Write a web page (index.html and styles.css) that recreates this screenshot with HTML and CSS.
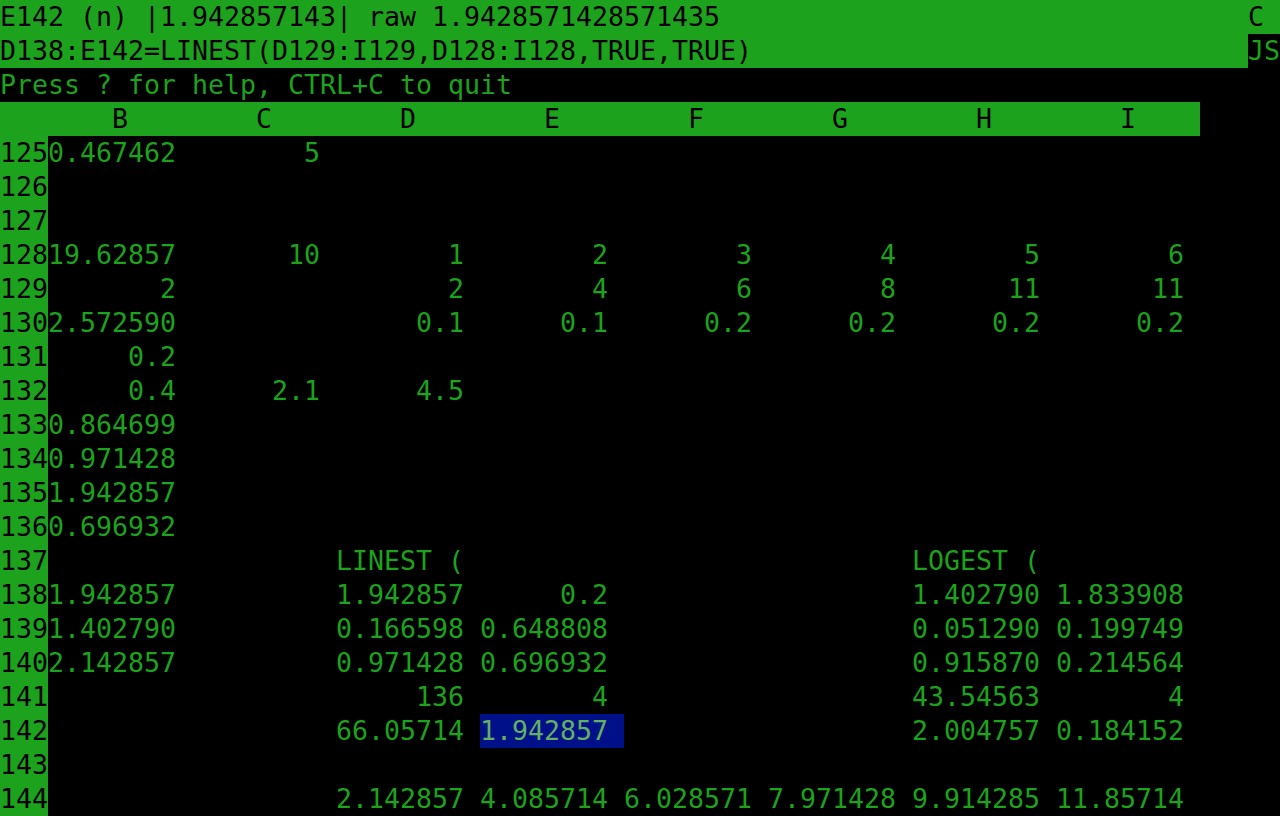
FILE: index.html
```html
<!DOCTYPE html>
<html>
<head>
<meta charset="utf-8">
<link rel="stylesheet" href="styles.css">
</head>
<body>
<div class="screen">
  <div class="line status">
    <span class="grow">E142 (n) |1.942857143| raw 1.9428571428571435</span>
    <span class="mode">C</span><span class="pad"></span>
  </div>
  <div class="line status">
    <span class="grow">D138:E142=LINEST(D129:I129,D128:I128,TRUE,TRUE)</span>
    <span class="js">JS</span>
  </div>
  <div class="line help">Press ? for help, CTRL+C to quit</div>
  <div class="line header">
    <span class="rn"></span>
    <span class="col">B</span><span class="col">C</span><span class="col">D</span><span class="col">E</span>
    <span class="col">F</span><span class="col">G</span><span class="col">H</span><span class="col">I</span>
  </div>
  <div class="line"><span class="rn">125</span><span class="c">0.467462</span><span class="c">5</span></div>
  <div class="line"><span class="rn">126</span></div>
  <div class="line"><span class="rn">127</span></div>
  <div class="line"><span class="rn">128</span><span class="c">19.62857</span><span class="c">10</span><span class="c">1</span><span class="c">2</span><span class="c">3</span><span class="c">4</span><span class="c">5</span><span class="c">6</span></div>
  <div class="line"><span class="rn">129</span><span class="c">2</span><span class="c"></span><span class="c">2</span><span class="c">4</span><span class="c">6</span><span class="c">8</span><span class="c">11</span><span class="c">11</span></div>
  <div class="line"><span class="rn">130</span><span class="c">2.572590</span><span class="c"></span><span class="c">0.1</span><span class="c">0.1</span><span class="c">0.2</span><span class="c">0.2</span><span class="c">0.2</span><span class="c">0.2</span></div>
  <div class="line"><span class="rn">131</span><span class="c">0.2</span></div>
  <div class="line"><span class="rn">132</span><span class="c">0.4</span><span class="c">2.1</span><span class="c">4.5</span></div>
  <div class="line"><span class="rn">133</span><span class="c">0.864699</span></div>
  <div class="line"><span class="rn">134</span><span class="c">0.971428</span></div>
  <div class="line"><span class="rn">135</span><span class="c">1.942857</span></div>
  <div class="line"><span class="rn">136</span><span class="c">0.696932</span></div>
  <div class="line"><span class="rn">137</span><span class="c"></span><span class="c"></span><span class="c lbl">LINEST (</span><span class="c"></span><span class="c"></span><span class="c"></span><span class="c lbl">LOGEST (</span></div>
  <div class="line"><span class="rn">138</span><span class="c">1.942857</span><span class="c"></span><span class="c">1.942857</span><span class="c">0.2</span><span class="c"></span><span class="c"></span><span class="c">1.402790</span><span class="c">1.833908</span></div>
  <div class="line"><span class="rn">139</span><span class="c">1.402790</span><span class="c"></span><span class="c">0.166598</span><span class="c">0.648808</span><span class="c"></span><span class="c"></span><span class="c">0.051290</span><span class="c">0.199749</span></div>
  <div class="line"><span class="rn">140</span><span class="c">2.142857</span><span class="c"></span><span class="c">0.971428</span><span class="c">0.696932</span><span class="c"></span><span class="c"></span><span class="c">0.915870</span><span class="c">0.214564</span></div>
  <div class="line"><span class="rn">141</span><span class="c"></span><span class="c"></span><span class="c">136</span><span class="c">4</span><span class="c"></span><span class="c"></span><span class="c">43.54563</span><span class="c">4</span></div>
  <div class="line"><span class="rn">142</span><span class="c"></span><span class="c"></span><span class="c">66.05714</span><span class="c sel">1.942857</span><span class="c"></span><span class="c"></span><span class="c">2.004757</span><span class="c">0.184152</span></div>
  <div class="line"><span class="rn">143</span></div>
  <div class="line"><span class="rn">144</span><span class="c"></span><span class="c"></span><span class="c">2.142857</span><span class="c">4.085714</span><span class="c">6.028571</span><span class="c">7.971428</span><span class="c">9.914285</span><span class="c">11.85714</span></div>
</div>
</body>
</html>
```

FILE: styles.css
```css
html, body {
  margin: 0;
  padding: 0;
  background: #000;
}
.screen {
  width: 1280px;
  height: 816px;
  overflow: hidden;
  background: #000;
  color: #1ca21c;
  font-family: "DejaVu Sans Mono", "Liberation Mono", monospace;
  font-size: 26.58px;
  line-height: 34px;
}
.line {
  display: flex;
  height: 34px;
  white-space: pre;
}
.status {
  background: #1ca21c;
  color: #000;
}
.status .grow {
  flex: 1;
}
.mode {
  width: 16px;
}
.pad {
  width: 16px;
}
.js {
  width: 32px;
  background: #000;
  color: #1ca21c;
}
.help {
  color: #1ca21c;
}
.header {
  width: 1200px;
  background: #1ca21c;
  color: #000;
}
.col {
  width: 144px;
  flex: none;
  text-align: center;
}
.rn {
  width: 48px;
  flex: none;
  background: #1ca21c;
  color: #000;
}
.header .rn {
  background: transparent;
}
.c {
  width: 144px;
  flex: none;
  box-sizing: border-box;
  padding-right: 16px;
  text-align: right;
}
.c.lbl {
  text-align: left;
}
.c.sel {
  background: #001088;
  color: #63b063;
}
```
